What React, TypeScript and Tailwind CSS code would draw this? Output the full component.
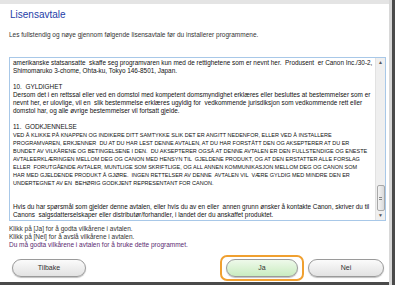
import React from "react";

const lines: { t: string; caps?: boolean }[] = [
  { t: "amerikanske statsansatte  skaffe seg programvaren kun med de rettighetene som er nevnt her.  Produsent  er Canon Inc./30-2," },
  { t: "Shimomaruko 3-chome, Ohta-ku, Tokyo 146-8501, Japan." },
  { t: "" },
  { t: "10.  GYLDIGHET" },
  { t: "Dersom det i en rettssal eller ved en domstol med kompetent domsmyndighet erklæres eller besluttes at bestemmelser som er" },
  { t: "nevnt her, er ulovlige, vil en  slik bestemmelse erklæres ugyldig for  vedkommende jurisdiksjon som vedkommende rett eller" },
  { t: "domstol har, og alle øvrige bestemmelser vil fortsatt gjelde." },
  { t: "" },
  { t: "11.  GODKJENNELSE" },
  { t: "VED Å KLIKKE PÅ KNAPPEN OG INDIKERE DITT SAMTYKKE SLIK DET ER ANGITT NEDENFOR, ELLER VED Å INSTALLERE", caps: true },
  { t: "PROGRAMVAREN, ERKJENNER  DU AT DU HAR LEST DENNE AVTALEN, AT DU HAR FORSTÅTT DEN OG AKSEPTERER AT DU ER", caps: true },
  { t: "BUNDET AV VILKÅRENE OG BETINGELSENE I DEN.  DU AKSEPTERER OGSÅ AT DENNE AVTALEN ER DEN FULLSTENDIGE OG ENESTE", caps: true },
  { t: "AVTALEERKLÆRINGEN MELLOM DEG OG CANON MED HENSYN TIL  GJELDENE PRODUKT, OG AT DEN ERSTATTER ALLE FORSLAG", caps: true },
  { t: "ELLER  FORUTGÅENDE AVTALER, MUNTLIGE SOM SKRIFTLIGE, OG ALL ANNEN KOMMUNIKASJON MELLOM DEG OG CANON SOM", caps: true },
  { t: "HAR MED GJELDENDE PRODUKT Å GJØRE.  INGEN RETTELSER AV DENNE  AVTALEN VIL  VÆRE GYLDIG MED MINDRE DEN ER", caps: true },
  { t: "UNDERTEGNET AV EN  BEHØRIG GODKJENT REPRESENTANT FOR CANON.", caps: true },
  { t: "" },
  { t: "" },
  { t: "Hvis du har spørsmål som gjelder denne avtalen, eller hvis du av en eller  annen grunn ønsker å kontakte Canon, skriver du til" },
  { t: "Canons  salgsdatterselskaper eller distributør/forhandler, i landet der du anskaffet produktet." },
];

function Btn({ label, w, green }: { label: string; w: string; green?: boolean }) {
  return (
    <div
      className={
        w +
        " h-[18px] rounded-full border border-[#9a9a9a] flex items-center justify-center text-[7px] text-[#333] shadow-[0_1px_1px_rgba(0,0,0,0.25)] " +
        (green
          ? "bg-gradient-to-b from-[#eef9ea] to-[#c9ecc0]"
          : "bg-gradient-to-b from-[#fbfbfb] to-[#e2e2e2]")
      }
    >
      {label}
    </div>
  );
}

export default function App() {
  return (
    <div
      className="w-[395px] h-[285px] overflow-hidden bg-[#e9e9e9] flex"
      style={{ fontFamily: '"Liberation Sans", Arial, sans-serif' }}
    >
      <div className="w-[389px] flex flex-col">
        <div className="flex-1 flex flex-col bg-white border-t-[4px] border-[#e4e4e4]">
          <div className="pl-[10px] pt-[5px] text-[10px] leading-[12px] text-[#2440a8]">
            Lisensavtale
          </div>
          <div className="pl-[9px] pt-[10px] text-[6.5px] leading-[8px] text-[#333]">
            Les fullstendig og nøye gjennom følgende lisensavtale før du installerer programmene.
          </div>
          <div className="ml-[9px] w-[377px] mt-[18px] h-[164px] border border-[#a8c8e8] flex">
            <div className="w-[365px] min-w-0 pl-[3px] pt-[1px] text-[6.4px] leading-[8px] text-[#111] overflow-hidden">
              {lines.map((l, i) => (
                <div
                  key={i}
                  className={"h-[8px] whitespace-pre " + (l.caps ? "text-[5.5px]" : "")}
                >
                  {l.t}
                </div>
              ))}
            </div>
            <div className="w-[10px] bg-[#efefef] border-l border-[#e2e2e2] flex flex-col items-center">
              <div className="h-[9px] text-[5px] leading-[9px] text-[#555]">▲</div>
              <div className="flex-1" />
              <div className="w-[8px] h-[26px] rounded-[2px] border border-[#a8a8a8] bg-gradient-to-r from-[#f4f4f4] to-[#dadada] flex items-center justify-center">
                <div className="w-[3px] h-[3px] border-y border-[#888]" />
              </div>
              <div className="h-[9px] text-[5px] leading-[9px] text-[#555]">▼</div>
            </div>
          </div>
          <div className="pl-[9px] pt-[4px] text-[6.5px] leading-[8px]">
            <div className="text-[#333]">Klikk på [Ja] for å godta vilkårene i avtalen.</div>
            <div className="text-[#333]">Klikk på [Nei] for å avslå vilkårene i avtalen.</div>
            <div className="text-[#5a2a70]">Du må godta vilkårene i avtalen for å bruke dette programmet.</div>
          </div>
          <div className="flex-1" />
          <div className="flex items-center pl-[12px] pr-[5px] pb-[1px]">
            <Btn label="Tilbake" w="w-[74px]" />
            <div className="flex-1" />
            <div className="rounded-[7px] border-2 border-[#f0a030] px-[4px] py-[2px] mr-[4px]">
              <Btn label="Ja" w="w-[72px]" green />
            </div>
            <Btn label="Nei" w="w-[76px]" />
          </div>
        </div>
        <div className="h-[3px] bg-[#4a4a4a]" />
      </div>
      <div className="w-[3px] bg-[#d8d8d8]" />
      <div className="w-[3px] bg-[#4a4a4a]" />
    </div>
  );
}
